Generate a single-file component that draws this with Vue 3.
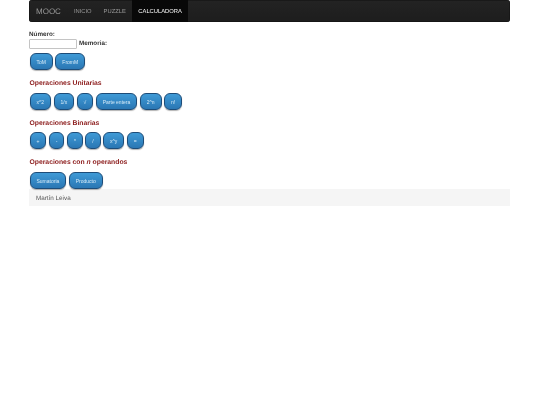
<template>
  <div class="container">
    <nav class="navbar">
      <span class="brand">MOOC</span>
      <a class="nav-link">INICIO</a>
      <a class="nav-link">PUZZLE</a>
      <a class="nav-link active">CALCULADORA</a>
    </nav>

    <div class="content">
      <div class="field">
        <label class="lbl">Número:</label>
        <div class="field-row">
          <input class="number-input" type="text" />
          <span class="lbl">Memoria:</span>
        </div>
      </div>
      <div class="buttons first">
        <button v-for="b in memoria" :key="b" class="calc-btn">{{ b }}</button>
      </div>

      <h4>Operaciones Unitarias</h4>
      <div class="buttons">
        <button v-for="b in unitarias" :key="b" class="calc-btn">{{ b }}</button>
      </div>

      <h4>Operaciones Binarias</h4>
      <div class="buttons">
        <button v-for="b in binarias" :key="b" class="calc-btn">{{ b }}</button>
      </div>

      <h4>Operaciones con <em>n</em> operandos</h4>
      <div class="buttons">
        <button v-for="b in variadicas" :key="b" class="calc-btn">{{ b }}</button>
      </div>
    </div>

    <footer class="footer">Martín Leiva</footer>
  </div>
</template>

<script setup>
const memoria = ['ToM', 'FromM']
const unitarias = ['x^2', '1/x', '√', 'Parte entera', '2^n', 'n!']
const binarias = ['+', '-', '*', '/', 'x^y', '=']
const variadicas = ['Sumatoria', 'Producto']
</script>

<style>
html,
body {
  background: #ffffff;
}
</style>

<style scoped>
.container {
  width: 481px;
  margin-left: 29px;
  font-family: "Liberation Sans", Arial, sans-serif;
  text-rendering: geometricPrecision;
  will-change: transform;
}

.navbar {
  display: flex;
  align-items: stretch;
  height: 22px;
  background: linear-gradient(#232323, #1d1d1d);
  border-radius: 3px;
  box-shadow: inset 0 0 0 0.5px #111;
}

.brand {
  display: flex;
  align-items: center;
  padding: 1px 7px 0 7px;
  font-size: 8px;
  color: #999;
}

.nav-link {
  display: flex;
  align-items: center;
  padding: 1px 6px 0;
  font-size: 5.8px;
  color: #999;
}

.nav-link.active {
  padding: 1px 6.5px 0;
  background: #080808;
  color: #fff;
}

.content {
  padding-top: 9px;
}

.lbl {
  font-weight: bold;
  font-size: 6.3px;
  color: #333;
  line-height: 8px;
  display: block;
}

.number-input {
  width: 48px;
  height: 10px;
  box-sizing: border-box;
  border: 1px solid #c4c4c4;
  border-radius: 1px;
  background: #fff;
  padding: 0;
  margin: 0;
}

.field-row {
  display: flex;
  align-items: center;
  gap: 2px;
}

.buttons {
  display: flex;
  gap: 2.4px;
  padding-left: 0.5px;
}

.buttons.first {
  margin-top: 4px;
}

h4 {
  margin: 10px 0 4.5px;
  padding-left: 0.5px;
  font-size: 6.8px;
  line-height: 8px;
  font-weight: bold;
  color: #8b1a1a;
}

.calc-btn {
  height: 17px;
  padding: 1px 6px 0;
  border: 1px solid #1d4c78;
  border-radius: 6px;
  background: linear-gradient(#3f9ad6, #2a77b4);
  box-shadow: 0 1px 1px rgba(0, 0, 0, 0.3);
  color: #d6eaf8;
  font-family: inherit;
  font-size: 5px;
  cursor: pointer;
}

.footer {
  height: 17px;
  display: flex;
  align-items: center;
  padding: 2px 0 0 7px;
  box-sizing: border-box;
  background: #f5f5f5;
  font-size: 6.3px;
  color: #555;
}
</style>
